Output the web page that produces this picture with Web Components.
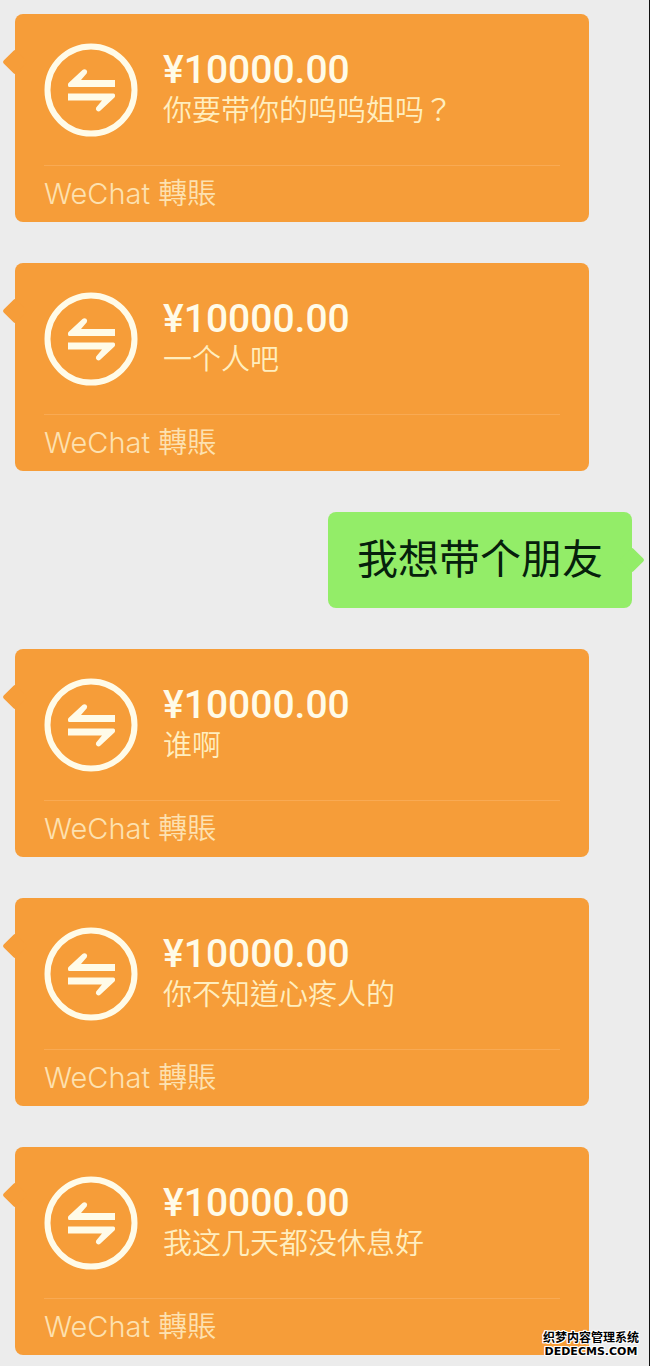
<!DOCTYPE html>
<html lang="zh">
<head>
<meta charset="utf-8">
<meta name="viewport" content="width=device-width, initial-scale=1">
<title>WeChat 轉賬</title>
<style>
  body {
    margin: 0;
    background: #ececec;
    font-family: Roboto, "Noto Sans CJK SC", sans-serif;
  }
</style>
</head>
<body>
<chat-thread>
  <transfer-card amount="¥10000.00">你要带你的呜呜姐吗？</transfer-card>
  <transfer-card amount="¥10000.00">一个人吧</transfer-card>
  <chat-bubble>我想带个朋友</chat-bubble>
  <transfer-card amount="¥10000.00">谁啊</transfer-card>
  <transfer-card amount="¥10000.00">你不知道心疼人的</transfer-card>
  <transfer-card amount="¥10000.00">我这几天都没休息好</transfer-card>
  <site-stamp slot="stamp" site="DEDECMS.COM">织梦内容管理系统</site-stamp>
</chat-thread>

<script>
// Small pointer on the side of a message, a rotated square half hidden by the box
const tailStyles = `
  .tail {
    position: absolute;
    top: 39px;
    width: 18px;
    height: 18px;
    border-radius: 2px;
    transform: rotate(45deg);
  }
`;

// Upper half of the transfer icon, the lower one is the same shape turned round
const arrowPath = 'M71 37V44H25.5Q24 44 24 42.5V41.4Q24 40.6 24.8 39.8L38.5 27Q40.4 25.4 42.2 26.8Q43.8 28.2 42.8 30.2L37 37Z';

class ChatThread extends HTMLElement {
  constructor() {
    super();
    this.attachShadow({ mode: 'open' });
    this.shadowRoot.innerHTML = `
      <style>
        :host {
          display: block;
          position: relative;
          box-sizing: border-box;
          min-height: 100vh;
          border-right: 1px solid #111;
          background: #ececec;
        }

        main {
          display: flex;
          flex-direction: column;
          gap: 41px;
          padding: 14px 17px 11px 15px;
        }
      </style>
      <main><slot></slot></main>
      <slot name="stamp"></slot>
    `;
  }
}

class TransferCard extends HTMLElement {
  constructor() {
    super();
    this.attachShadow({ mode: 'open' });
  }

  connectedCallback() {
    this.shadowRoot.innerHTML = `
      <style>
        :host {
          display: block;
          position: relative;
          margin-right: 43px;
          border-radius: 8px;
          background: #f69d39;
        }

        ${tailStyles}

        .tail {
          left: -9px;
          background: #f69d39;
        }

        .top {
          display: flex;
          gap: 25px;
          padding: 29px 29px 28px;
        }

        svg {
          flex: none;
          width: 94px;
          height: 94px;
        }

        .amount {
          margin-top: 6px;
          color: #fffbe8;
          font-size: 39px;
          font-weight: 500;
          line-height: 42px;
        }

        .note {
          color: #ffeebf;
          font-family: Roboto, "Noto Sans CJK TC", sans-serif;
          font-size: 29px;
          font-weight: 350;
          line-height: 40px;
        }

        footer {
          margin: 0 29px;
          border-top: 1px solid #f9aa53;
          color: #fde1b0;
          font-family: Inter, "Noto Sans CJK TC", sans-serif;
          font-size: 29px;
          font-weight: 350;
          line-height: 56px;
        }
      </style>
      <div class="tail"></div>
      <div class="top">
        <svg viewBox="0 0 94 94" aria-hidden="true">
          <circle cx="47" cy="47" r="43.5" fill="none" stroke="#fffbe8" stroke-width="6"/>
          <g fill="#fffbe8">
            <path d="${arrowPath}"/>
            <path transform="rotate(180 47.5 47.3)" d="${arrowPath}"/>
          </g>
        </svg>
        <div>
          <div class="amount">${this.getAttribute('amount')}</div>
          <div class="note" lang="zh-Hant"><slot></slot></div>
        </div>
      </div>
      <footer>WeChat <span lang="zh-Hant">轉賬</span></footer>
    `;
  }
}

class ChatBubble extends HTMLElement {
  constructor() {
    super();
    this.attachShadow({ mode: 'open' });
    this.shadowRoot.innerHTML = `
      <style>
        :host {
          display: block;
          position: relative;
          align-self: flex-end;
          padding: 18px 29px;
          border-radius: 8px;
          background: #93ed68;
          color: #06200c;
          font-size: 41px;
          line-height: 60px;
        }

        ${tailStyles}

        .tail {
          right: -9px;
          background: #93ed68;
        }
      </style>
      <div class="tail"></div>
      <slot></slot>
    `;
  }
}

class SiteStamp extends HTMLElement {
  constructor() {
    super();
    this.attachShadow({ mode: 'open' });
  }

  connectedCallback() {
    this.shadowRoot.innerHTML = `
      <style>
        :host {
          position: absolute;
          right: 10px;
          bottom: 8px;
          display: block;
          color: #000;
          font-size: 12px;
          font-weight: 700;
          line-height: 13px;
          text-align: center;
          text-shadow: 1px 0 #fff, -1px 0 #fff, 0 1px #fff, 0 -1px #fff,
            1px 1px #fff, -1px -1px #fff, 1px -1px #fff, -1px 1px #fff;
        }

        .site {
          font-family: "DejaVu Sans", sans-serif;
          font-size: 11px;
        }
      </style>
      <div><slot></slot></div>
      <div class="site">${this.getAttribute('site')}</div>
    `;
  }
}

customElements.define('chat-thread', ChatThread);
customElements.define('transfer-card', TransferCard);
customElements.define('chat-bubble', ChatBubble);
customElements.define('site-stamp', SiteStamp);
</script>
</body>
</html>
